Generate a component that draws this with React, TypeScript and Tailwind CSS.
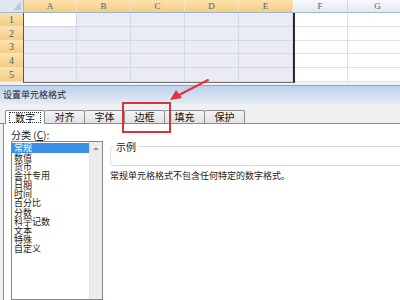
import React from "react";

const cols = [
  { l: "", w: 24 },
  { l: "A", w: 53 },
  { l: "B", w: 54 },
  { l: "C", w: 54 },
  { l: "D", w: 54 },
  { l: "E", w: 54 },
  { l: "F", w: 55 },
  { l: "G", w: 60 },
];
const rowH = [14, 14, 13, 14, 14];
const items = ["常规", "数值", "货币", "会计专用", "日期", "时间", "百分比", "分数", "科学记数", "文本", "特殊", "自定义"];
const tabs = ["数字", "对齐", "字体", "边框", "填充", "保护"];

export default function App() {
  const cjk = { fontFamily: '"Noto Sans CJK SC", "Noto Sans", sans-serif' };
  return (
    <div className="relative w-[400px] h-[300px] overflow-hidden bg-white flex flex-col" style={cjk}>
      {/* spreadsheet */}
      <div className="flex flex-col shrink-0" style={{ fontFamily: '"Liberation Serif", serif' }}>
        <div className="flex h-[13px] border-b border-[#9eb6ce]">
          {cols.map((c, i) => (
            <div
              key={i}
              style={{ width: c.w }}
              className={
                "shrink-0 flex items-center justify-center text-[9px] leading-none text-[#4d5d74] border-r " +
                (i === 0
                  ? "relative bg-[#dfe6f0] border-[#9eb6ce]"
                  : i <= 5
                  ? "bg-gradient-to-b from-[#fbe2ae] to-[#f5cc82] border-[#f8e3b8]"
                  : "bg-gradient-to-b from-[#f7f9fc] to-[#e3e8ef] border-[#d0d7e5]")
              }
            >
              {i === 0 ? (
                <div className="absolute right-[2px] bottom-[2px] w-0 h-0 border-l-[8px] border-l-transparent border-b-[8px] border-b-[#b9c8da]" />
              ) : (
                c.l
              )}
            </div>
          ))}
        </div>
        {rowH.map((h, r) => (
          <div key={r} className="flex" style={{ height: h }}>
            {cols.map((c, i) => (
              <div
                key={i}
                style={{ width: c.w }}
                className={
                  "shrink-0 border-r border-b " +
                  (i === 0
                    ? "flex items-center justify-center text-[10px] leading-none text-[#4d5d74] bg-gradient-to-b from-[#fbe2ae] to-[#f5cc82] border-r-[#9eb6ce] border-b-[#f8e3b8]"
                    : i <= 5
                    ? (r === 0 && i === 1 ? "bg-white" : "bg-[#eaebf5]") + " border-[#d2d7e6]"
                    : "bg-white border-[#dbe1ec]")
                }
              >
                {i === 0 ? String(r + 1) : null}
              </div>
            ))}
          </div>
        ))}
        <div className="h-[3px] bg-[#eef1f5]" />
        <div className="h-[1px] bg-[#97a3b3]" />
      </div>

      {/* dialog */}
      <div className="flex-1 flex flex-col bg-[#f0f0f2]">
        <div className="h-[18px] shrink-0 flex items-center pl-[3px] bg-gradient-to-b from-[#bdd1ea] to-[#e3ecf7] text-[9px] text-[#1c1c1c]">
          设置单元格格式
        </div>
        <div className="h-[6px] shrink-0" />
        <div className="flex h-[14px] shrink-0 pl-[5px] border-b border-[#898c95]">
          {tabs.map((t, i) => (
            <div
              key={t}
              className={
                "w-[40px] flex items-center justify-center text-[10px] leading-none text-[#111] border-t border-r border-[#898c95] rounded-t-[2px] " +
                (i === 0 ? "bg-white border-l -mb-[1px]" : "bg-gradient-to-b from-[#f4f4f4] to-[#e2e2e2]")
              }
            >
              {i === 0 ? (
                <span className="border border-dotted border-[#333] px-[5px] h-[11px] flex items-center">{t}</span>
              ) : (
                t
              )}
            </div>
          ))}
        </div>
        <div className="flex-1 flex ml-[3px] bg-white border-l border-[#898c95]">
          <div className="ml-[7px] w-[92px] flex flex-col">
            <div className="pt-[4px] h-[17px] text-[10px] leading-[13px] text-[#1a1a1a]">
              分类 (<span className="underline">C</span>):
            </div>
            <div className="flex-1 flex border border-[#828790] bg-white">
              <div className="flex-1 flex flex-col pt-[1px] text-[9px] leading-[9.1px] text-[#1a1a1a]">
                {items.map((it, i) => (
                  <div
                    key={it}
                    className={"pl-[2px] h-[9.1px] " + (i === 0 ? "bg-[#3a8ee6] text-white h-[10px]" : "")}
                  >
                    {it}
                  </div>
                ))}
              </div>
              <div className="w-[13px] flex flex-col bg-[#ececec] border-l border-[#e0e0e0]">
                <div className="h-[13px] flex items-center justify-center">
                  <div className="w-0 h-0 border-l-[3px] border-l-transparent border-r-[3px] border-r-transparent border-b-[3px] border-b-[#9a9a9a]" />
                </div>
              </div>
            </div>
          </div>
          <div className="ml-[7px] flex-1 flex flex-col pt-[16px]">
            <fieldset className="h-[26px] border border-[#d5dde4] rounded-[3px] -mr-[6px]">
              <legend className="ml-[3px] px-[2px] text-[10px] leading-[13px] text-[#1a1a1a]">示例</legend>
            </fieldset>
            <div className="mt-[3px] text-[9px] leading-[13px] text-[#222]">常规单元格格式不包含任何特定的数字格式。</div>
          </div>
        </div>
      </div>

      {/* selection border */}
      <div className="absolute left-[23px] top-[13px] w-[272px] h-[70px] border-l border-b border-r-2 border-l-[#555] border-b-[#777] border-r-[#2a2a2a] pointer-events-none" />
      {/* red highlight box */}
      <div className="absolute left-[122px] top-[102px] w-[49px] h-[31px] border-2 border-[#d6343c]" />
      {/* arrow */}
      <svg className="absolute left-0 top-0" width="400" height="300" viewBox="0 0 400 300">
        <line x1="208" y1="80" x2="179" y2="95" stroke="#e0333b" strokeWidth="2" strokeLinecap="round" />
        <polygon points="170,100 176,90 182,98" fill="#e0333b" />
      </svg>
    </div>
  );
}
